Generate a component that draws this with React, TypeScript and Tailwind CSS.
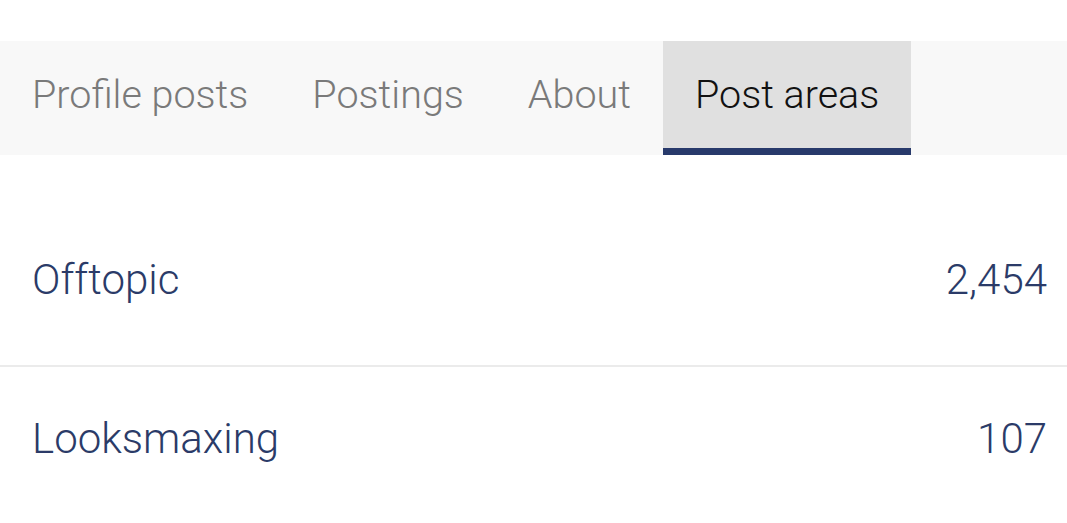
import React from "react";

const tabs = ["Profile posts", "Postings", "About", "Post areas"];
const rows = [
  { name: "Offtopic", count: "2,454" },
  { name: "Looksmaxing", count: "107" },
];

export default function App() {
  return (
    <div
      className="w-[1067px] h-[523px] overflow-hidden bg-white font-light"
      style={{ fontFamily: "Roboto, 'Noto Sans', sans-serif" }}
    >
      <div className="h-[41px]" />
      <div className="flex h-[114px] bg-[#f8f8f8]">
        {tabs.map((t, i) => {
          const active = i === tabs.length - 1;
          return (
            <div
              key={t}
              className={
                active
                  ? "flex items-start px-[32px] pt-[30px] bg-[#e0e0e0] text-[#111111] border-b-[7px] border-[#283a6b] text-[39.5px] leading-[48px]"
                  : "flex items-start px-[32px] pt-[30px] text-[#7a7a7a] text-[39.5px] leading-[48px]"
              }
            >
              {t}
            </div>
          );
        })}
      </div>
      <div className="mt-[53px]">
        {rows.map((r, i) => (
          <div
            key={r.name}
            className={
              "flex justify-between items-start pl-[32px] pr-[20px] pt-[47px] text-[42px] leading-[50px] text-[#2b3b68]" +
              (i === 0 ? " h-[159px] border-b-2 border-[#ebebeb]" : " h-[157px]")
            }
          >
            <span>{r.name}</span>
            <span>{r.count}</span>
          </div>
        ))}
      </div>
    </div>
  );
}
